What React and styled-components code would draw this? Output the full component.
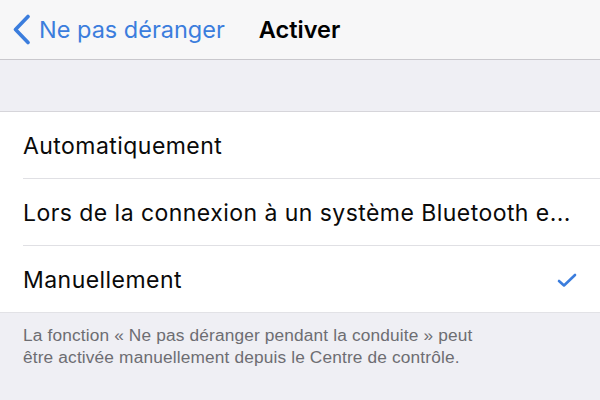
import React from "react";
import styled, { createGlobalStyle } from "styled-components";

const Global = createGlobalStyle`
  html, body { margin: 0; padding: 0; background: #efeff4; }
  body { font-family: "Liberation Sans", Arial, sans-serif; -webkit-font-smoothing: antialiased; }
`;

const Screen = styled.div`
  width: 600px;
  height: 400px;
  overflow: hidden;
  background: #efeff4;
  display: flex;
  flex-direction: column;
`;

const NavBar = styled.div`
  height: 60px;
  box-sizing: border-box;
  background: #f7f7f8;
  border-bottom: 1px solid #c9c8cd;
  display: flex;
  align-items: center;
  padding-left: 12px;
`;

const BackButton = styled.div`
  display: flex;
  align-items: center;
  gap: 8px;
  color: #3b7ddd;
  font-family: Inter, "Liberation Sans", sans-serif;
  font-size: 23.5px;
`;

const Title = styled.div`
  margin-left: 34px;
  font-family: Inter, "Liberation Sans", sans-serif;
  font-size: 23.5px;
  font-weight: 600;
  color: #000;
`;

const Spacer = styled.div`
  height: 51px;
  border-bottom: 1px solid #d6d5da;
`;

const Group = styled.div`
  background: #fff;
  border-bottom: 1px solid #e2e2e6;
`;

const Row = styled.div`
  height: 64px;
  padding-top: 2px;
  margin-left: 23px;
  padding-right: 23px;
  display: flex;
  align-items: center;
  justify-content: space-between;
  border-top: ${(p) => (p.$first ? "none" : "1px solid #e0e0e4")};
  font-family: Inter, "Liberation Sans", sans-serif;
  font-size: 23px;
  letter-spacing: 0.45px;
  color: #0a0a0a;
  white-space: nowrap;
`;

const Footer = styled.div`
  padding: 12px 23px 0 23px;
  font-size: 17.3px;
  line-height: 21.5px;
  color: #6d6d72;
  letter-spacing: 0.15px;
`;

export default function App() {
  return (
    <Screen>
      <Global />
      <NavBar>
        <BackButton>
          <svg width="19" height="31" viewBox="0 0 19 31">
            <path d="M16 2.5 L3.5 15.5 L16 28.5" fill="none" stroke="#3b7ddd" strokeWidth="3.6" strokeLinecap="round" strokeLinejoin="round" />
          </svg>
          Ne pas déranger
        </BackButton>
        <Title>Activer</Title>
      </NavBar>
      <Spacer />
      <Group>
        <Row $first>Automatiquement</Row>
        <Row>Lors de la connexion à un système Bluetooth e...</Row>
        <Row>
          Manuellement
          <svg width="20" height="15" viewBox="0 0 20 15">
            <path d="M2 8 L7 12.5 L18 2" fill="none" stroke="#3b7ddd" strokeWidth="2.6" strokeLinecap="round" strokeLinejoin="round" />
          </svg>
        </Row>
      </Group>
      <Footer>
        La fonction « Ne pas déranger pendant la conduite » peut
        <br />
        être activée manuellement depuis le Centre de contrôle.
      </Footer>
    </Screen>
  );
}
